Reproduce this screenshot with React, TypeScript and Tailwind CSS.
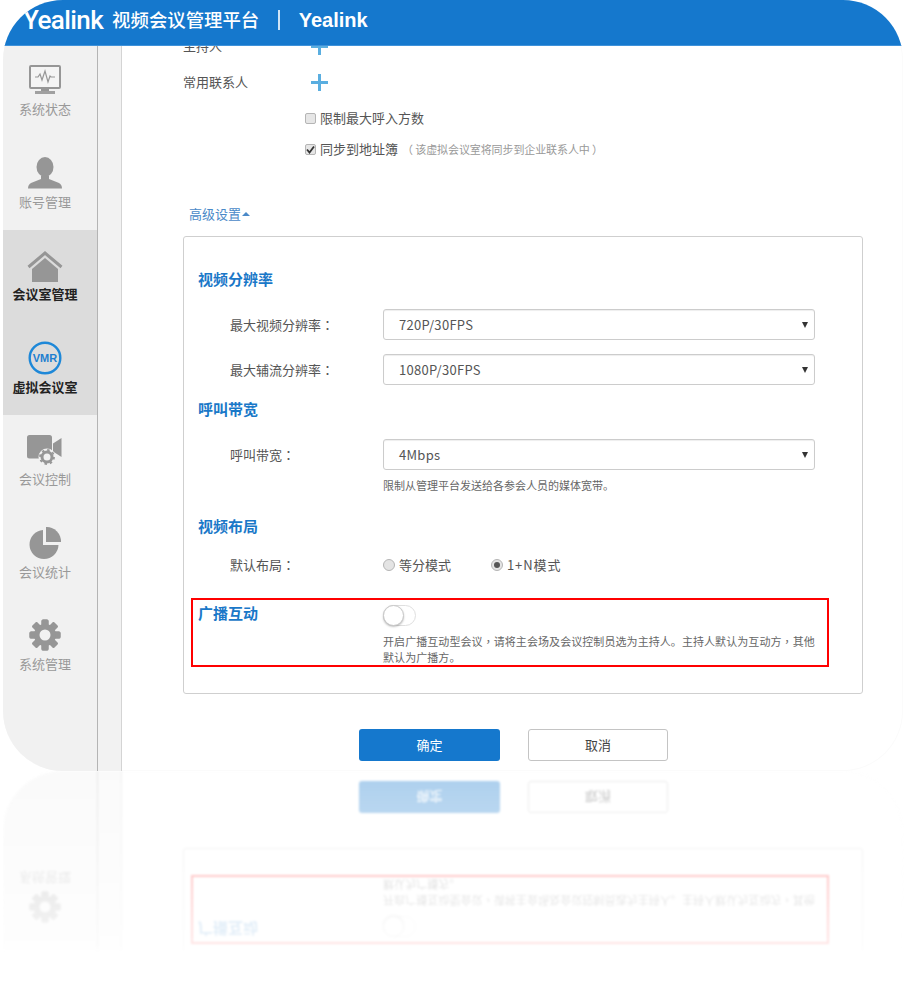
import React from "react";

const F = "font-['Noto_Sans_CJK_SC','Noto_Sans',sans-serif]";

function MonitorIcon() {
  return (
    <svg width="32" height="30" viewBox="0 0 32 30" fill="none">
      <rect x="1" y="1" width="30" height="22" rx="1" stroke="#969696" strokeWidth="2" fill="#f4f4f4" />
      <path d="M6 12h3l2-3 2 6 3-9 3 11 2-6 1 1h4" stroke="#969696" strokeWidth="1.2" />
      <rect x="12" y="23" width="8" height="3" fill="#969696" />
      <rect x="6" y="26" width="20" height="3" fill="#a0a0a0" />
    </svg>
  );
}
function UserIcon() {
  return (
    <svg width="36" height="32" viewBox="0 0 36 32">
      <ellipse cx="18" cy="10" rx="8.5" ry="10" fill="#969696" />
      <path d="M14 19h8v3l10 4c2 1 3 3 3 5.500H1c0-2.500 1-4.500 3-5.500l10-4z" fill="#969696" />
    </svg>
  );
}
function HomeIcon() {
  return (
    <svg width="36" height="36" viewBox="0 -4 36 36">
      <path d="M1.500 16 18 2l16.500 14" fill="none" stroke="#969696" strokeWidth="3" />
      <path d="M5 18 18 7l13 11v13H5z" fill="#969696" />
    </svg>
  );
}
function VmrIcon() {
  return (
    <svg width="34" height="34" viewBox="0 0 34 34">
      <circle cx="17" cy="17" r="15.300" fill="none" stroke="#1e88d8" strokeWidth="2.400" />
      <text x="17" y="21" textAnchor="middle" fontSize="11" fontWeight="700" fill="#1e7fd0" fontFamily="Liberation Sans">VMR</text>
    </svg>
  );
}
function CameraIcon() {
  return (
    <svg width="36" height="30" viewBox="0 0 36 30">
      <path d="M0 2.500A2.500 2.500 0 0 1 2.500 0h20A2.500 2.500 0 0 1 25 2.500v19a2 2 0 0 1-2 2H2.500A2.500 2.500 0 0 1 0 21z" fill="#969696" />
      <path d="M26 8.500 34.500 3v19L26 16.500z" fill="#969696" />
      <circle cx="20" cy="22" r="8.500" fill="#f1f1f1" />
      <circle cx="20" cy="22" r="5" fill="none" stroke="#969696" strokeWidth="3" />
      <circle cx="20" cy="22" r="7" fill="none" stroke="#969696" strokeWidth="1.800" strokeDasharray="2.500 3" />
    </svg>
  );
}
function PieIcon() {
  return (
    <svg width="32" height="32" viewBox="0 0 32 32">
      <path d="M14 3A14.500 14.500 0 1 0 29.500 18H14z" fill="#969696" />
      <path d="M17 0a14.500 14.500 0 0 1 15 15H17z" fill="#969696" />
    </svg>
  );
}
function GearIcon() {
  const teeth = [0, 45, 90, 135, 180, 225, 270, 315];
  return (
    <svg width="32" height="32" viewBox="0 0 32 32">
      {teeth.map((a) => (
        <rect key={a} x="12.500" y="0.500" width="7" height="31" rx="1.500" fill="#969696" transform={`rotate(${a} 16 16)`} />
      ))}
      <circle cx="16" cy="16" r="11" fill="#969696" />
      <circle cx="16" cy="16" r="5.500" fill="#f1f1f1" />
    </svg>
  );
}

function NavItem({ icon, label, active }: { icon: React.ReactNode; label: string; active?: boolean }) {
  return (
    <div className={`h-[92.5px] flex flex-col items-center pt-[18px] pr-[10px] ${active ? "bg-[#dcdcdc]" : ""}`}>
      <div className="h-[34px] flex items-center justify-center">{icon}</div>
      <div className={`mt-[2px] text-[13px] leading-[20px] ${active ? "font-bold text-[#222]" : "text-[#999]"}`}>{label}</div>
    </div>
  );
}

function Plus() {
  return (
    <svg width="17" height="17" viewBox="0 0 17 17">
      <path d="M7 0h3v7h7v3h-7v7H7v-7H0V7h7z" fill="#5aaee0" />
    </svg>
  );
}

function Select({ value }: { value: string }) {
  return (
    <div className="w-[432px] h-[31px] border border-[#cccccc] rounded-[3px] flex items-center justify-between pl-[15px] pr-[6px] text-[13px] tracking-[0.3px] text-[#555] shadow-[inset_0_1px_1px_rgba(0,0,0,0.07)]">
      <span>{value}</span>
      <span className="w-0 h-0 border-x-[3.500px] border-x-transparent border-t-[6px] border-t-[#333]" />
    </div>
  );
}

function Radio({ checked }: { checked?: boolean }) {
  return (
    <span className="w-[12px] h-[12px] rounded-full border border-[#b5b5b5] bg-[#e4e4e4] flex items-center justify-center">
      {checked && <span className="w-[6px] h-[6px] rounded-full bg-[#555]" />}
    </span>
  );
}

function Check({ checked }: { checked?: boolean }) {
  return (
    <span className="w-[11px] h-[11px] rounded-[2px] border border-[#b5b5b5] bg-[#e6e6e6] flex items-center justify-center">
      {checked && (
        <svg width="9" height="9" viewBox="0 0 9 9">
          <path d="M1 4.500 3.500 7.500 8 1.500" stroke="#333" strokeWidth="1.800" fill="none" />
        </svg>
      )}
    </span>
  );
}

function SectionTitle({ children }: { children: React.ReactNode }) {
  return <div className="text-[15px] leading-[20px] font-bold text-[#1a78c8]">{children}</div>;
}

function P({ children }: { children: string }) {
  return <span className="font-['Noto_Sans_CJK_TC',sans-serif]">{children}</span>;
}

function Screen() {
  return (
    <div className={`relative w-[900px] h-[771px] rounded-[60px] overflow-hidden bg-white shadow-[inset_0_0_0_1px_#fbfbfb] ${F}`}>
      <div className="absolute top-0 left-0 right-0 h-[46px] z-10 bg-[#1578cd] border-b border-[#3f92da] flex items-center pl-[20px] pb-[6px] text-white">
        <span className="text-[26px] font-medium font-['Roboto',sans-serif] tracking-[-0.6px] leading-none">Yealink</span>
        <span className="ml-[9px] text-[18.4px] font-medium leading-none">视频会议管理平台</span>
        <span className="ml-[19px] w-[1.5px] h-[20px] bg-[#cfe4f6]" />
        <span className="ml-[19px] text-[20px] font-bold font-['Liberation_Sans',sans-serif] leading-none">Yealink</span>
      </div>
      <div className="flex h-full">
        <div className="w-[95px] shrink-0 bg-[#f1f1f1] border-r border-[#b4b4b4] pt-[45px]">
          <NavItem icon={<MonitorIcon />} label="系统状态" />
          <NavItem icon={<UserIcon />} label="账号管理" />
          <NavItem icon={<HomeIcon />} label="会议室管理" active />
          <NavItem icon={<VmrIcon />} label="虚拟会议室" active />
          <NavItem icon={<CameraIcon />} label="会议控制" />
          <NavItem icon={<PieIcon />} label="会议统计" />
          <NavItem icon={<GearIcon />} label="系统管理" />
        </div>
        <div className="w-[24px] shrink-0 bg-[#f2f2f2] border-r border-[#d4d4d4]" />
        <div className="flex-1 pl-[61px] text-[13px] text-[#555]">
          <div className="flex h-[36px] mt-[28px] items-center">
            <span className="w-[128px]">主持人</span>
            <Plus />
          </div>
          <div className="flex h-[36px] mt-0 items-center">
            <span className="w-[128px]">常用联系人</span>
            <Plus />
          </div>
          <div className="flex items-center ml-[122px] mt-[8px] h-[20px] gap-[4px]">
            <Check />
            <span>限制最大呼入方数</span>
          </div>
          <div className="flex items-center ml-[122px] mt-[11px] h-[20px] gap-[4px]">
            <Check checked />
            <span>同步到地址簿</span>
            <span className="text-[11px] text-[#999] tracking-[-0.1px]">（ 该虚拟会议室将同步到企业联系人中 ）</span>
          </div>
          <div className="flex items-center ml-[6px] mt-[45px] h-[20px] text-[#4a89c8]">
            <span>高级设置</span>
            <span className="ml-[1px] w-0 h-0 border-x-[4px] border-x-transparent border-b-[4px] border-b-[#4a89c8]" />
          </div>
          <div className="mt-[12px] w-[680px] h-[458px] border border-[#cfcfcf] rounded-[3px] pl-[14px] pt-[32px]">
            <SectionTitle>视频分辨率</SectionTitle>
            <div className="flex items-center mt-[20px] ml-[32px]">
              <span className="w-[153px]">最大视频分辨率<P>：</P></span>
              <Select value="720P/30FPS" />
            </div>
            <div className="flex items-center mt-[14px] ml-[32px]">
              <span className="w-[153px]">最大辅流分辨率<P>：</P></span>
              <Select value="1080P/30FPS" />
            </div>
            <div className="mt-[14px]"><SectionTitle>呼叫带宽</SectionTitle></div>
            <div className="flex items-center mt-[20px] ml-[32px]">
              <span className="w-[153px]">呼叫带宽<P>：</P></span>
              <Select value="4Mbps" />
            </div>
            <div className="ml-[185px] mt-[6px] text-[11px] leading-[18px] text-[#666]">限制从管理平台发送给各参会人员的媒体宽带。</div>
            <div className="mt-[22px]"><SectionTitle>视频布局</SectionTitle></div>
            <div className="flex items-center mt-[19px] ml-[32px] h-[20px]">
              <span className="w-[153px]">默认布局<P>：</P></span>
              <Radio />
              <span className="ml-[4px] w-[92px]">等分模式</span>
              <Radio checked />
              <span className="ml-[4px] tracking-[0.9px]">1+N模式</span>
            </div>
            <div className="mt-[23px] -ml-[7px] w-[638px] h-[69px] border-2 border-[#ff0000] flex pl-[5px] pt-[3px]">
              <div className="w-[185px] shrink-0"><SectionTitle>广播互动</SectionTitle></div>
              <div>
                <div className="relative mt-[2px] w-[33px] h-[21px] rounded-full border border-[#dfdfdf] bg-white">
                  <span className="absolute -left-[1px] -top-[1px] w-[21px] h-[21px] rounded-full bg-white border border-[#c8c8c8] shadow-[0_1px_2px_rgba(0,0,0,0.25)]" />
                </div>
                <div className="mt-[7px] w-[433px] text-[11px] leading-[16px] tracking-[0.07px] text-[#666]">开启广播互动型会议<P>，</P>请将主会场及会议控制员选为主持人。主持人默认为互动方<P>，</P>其他默认为广播方。</div>
              </div>
            </div>
          </div>
          <div className="flex mt-[35px] ml-[176px] gap-[28px] text-[13px]">
            <div className="w-[141px] h-[32px] rounded-[3px] bg-[#1578cd] text-white flex items-center justify-center">确定</div>
            <div className="w-[140px] h-[32px] rounded-[3px] border border-[#c4c4c4] text-[#444] flex items-center justify-center">取消</div>
          </div>
        </div>
      </div>
    </div>
  );
}

export default function App() {
  return (
    <div className="w-[906px] h-[986px] bg-white overflow-hidden pl-[3px]">
      <Screen />
      <div className="h-[190px] overflow-hidden [mask-image:linear-gradient(to_bottom,rgba(0,0,0,0.36)_0px,rgba(0,0,0,0.1)_174px,rgba(0,0,0,0)_182px)] blur-[0.8px]">
        <div className="-scale-y-100 origin-top translate-y-[771px]">
          <Screen />
        </div>
      </div>
    </div>
  );
}
